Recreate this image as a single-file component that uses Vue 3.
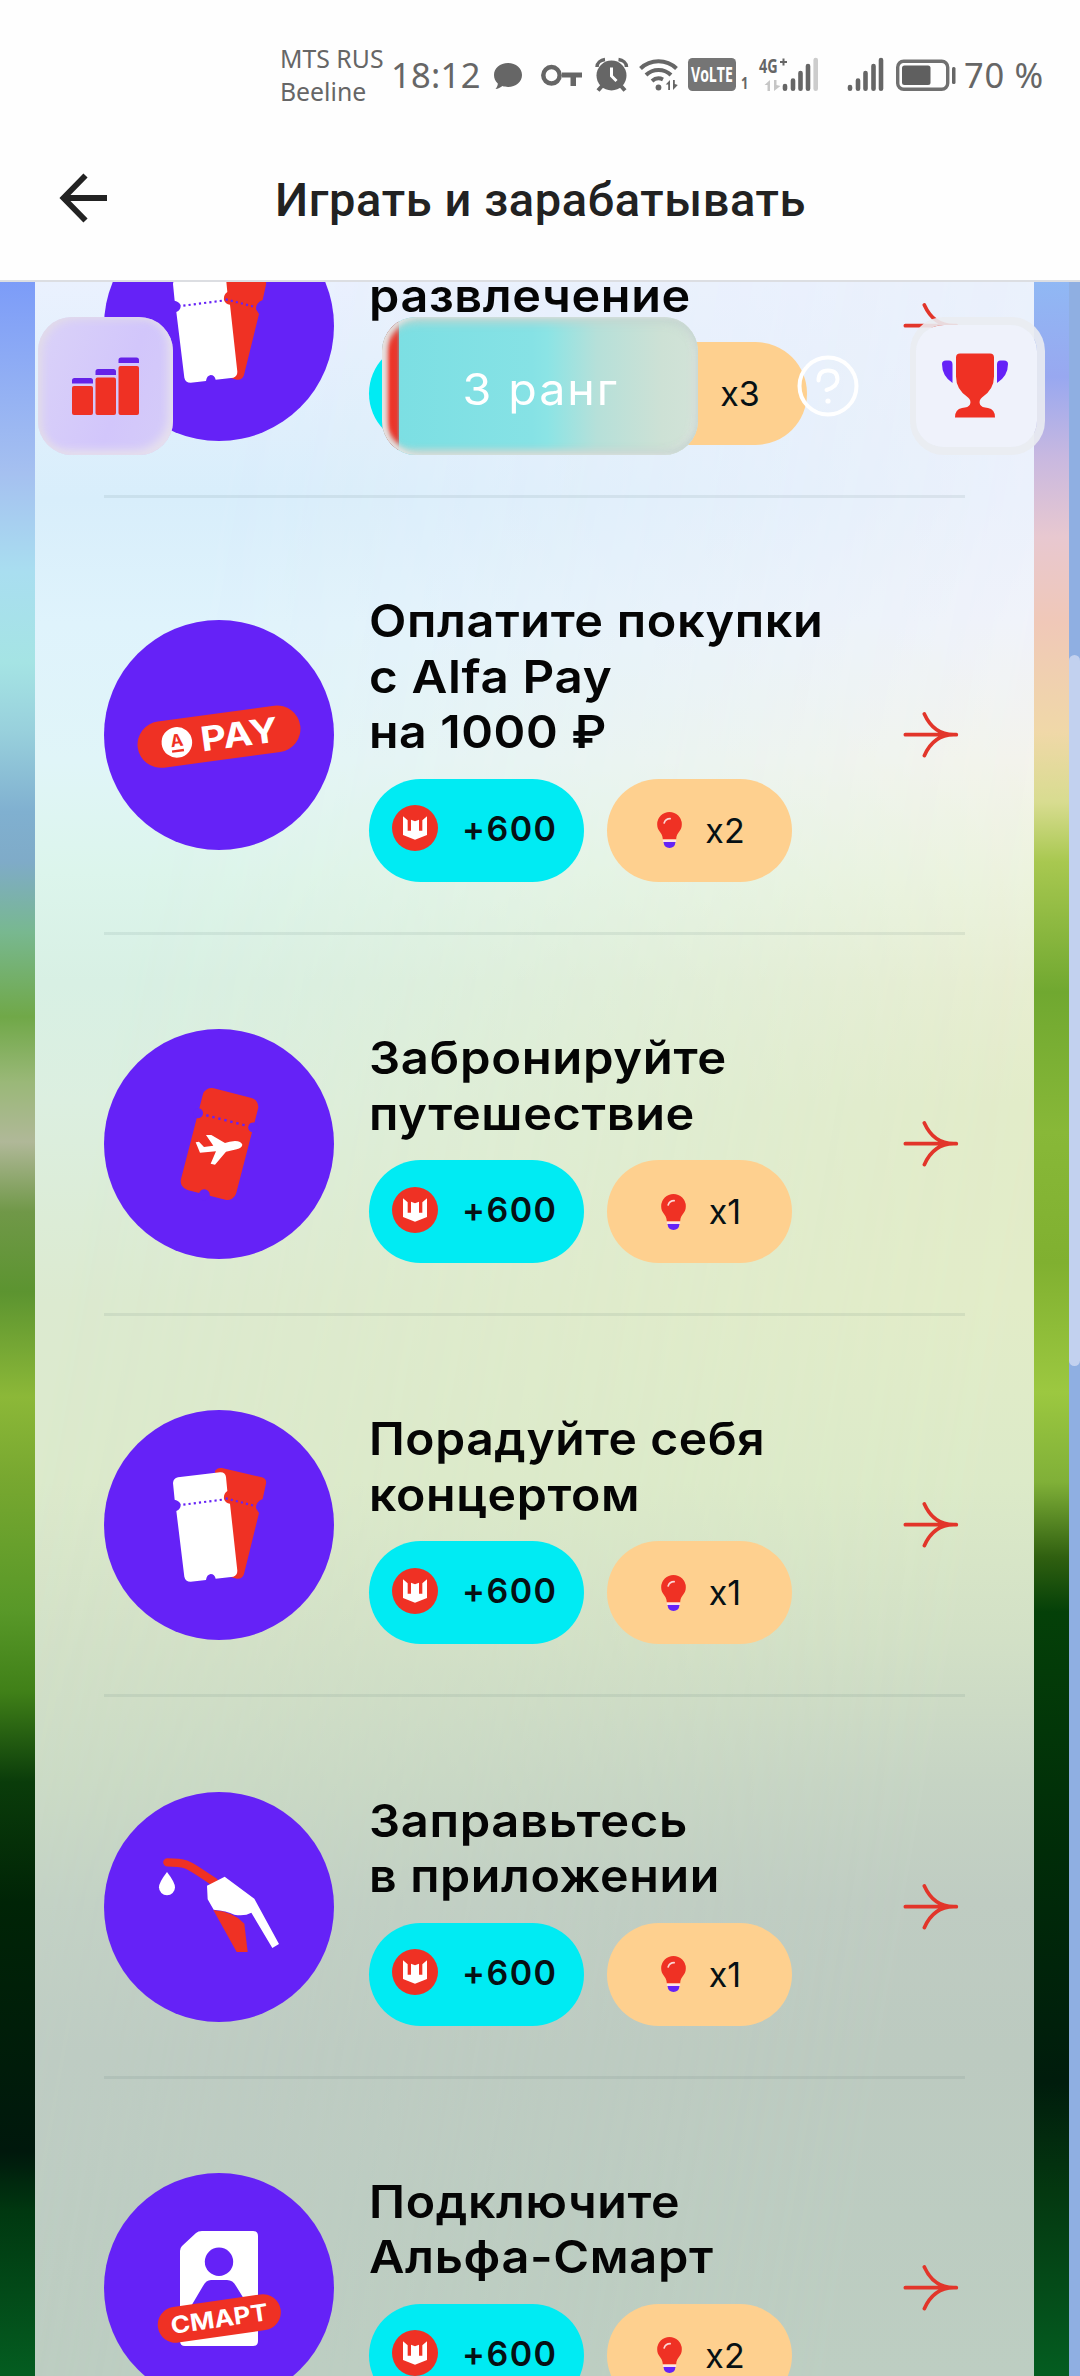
<script setup>
const tasks = [
  { icon: 'tickets', lines: [{ t: 'развлечение', w: 1.078 }], coins: '', bonus: 'x3', wide: true },
  { icon: 'pay', lines: [{ t: 'Оплатите покупки', w: 1.08 }, { t: 'с Alfa Pay', w: 1.096 }, { t: 'на 1000 ₽', w: 1.07 }], coins: '+600', bonus: 'x2' },
  { icon: 'travel', lines: [{ t: 'Забронируйте', w: 1.089 }, { t: 'путешествие', w: 1.08 }], coins: '+600', bonus: 'x1' },
  { icon: 'tickets', lines: [{ t: 'Порадуйте себя', w: 1.065 }, { t: 'концертом', w: 1.072 }], coins: '+600', bonus: 'x1' },
  { icon: 'fuel', lines: [{ t: 'Заправьтесь', w: 1.086 }, { t: 'в приложении', w: 1.074 }], coins: '+600', bonus: 'x1' },
  { icon: 'smart', lines: [{ t: 'Подключите', w: 1.073 }, { t: 'Альфа-Смарт', w: 1.082 }], coins: '+600', bonus: 'x2' },
]
</script>

<template>
  <div class="screen">
    <div class="status">
      <div class="carriers"><span>MTS RUS</span><span>Beeline</span></div>
      <div class="clock">18:12</div>
      <svg class="status-icons" viewBox="490 40 472 70" width="472" height="70">
        <g fill="#666">
          <path d="M508 63c8 0 14 5.200 14 12s-6 12-14 12c-2 0-4-.3-5.500-.9-2 1.600-4.500 2.800-7 3 1.500-1.800 2.300-3.600 2.300-5.600-2.400-2.200-3.800-5.200-3.800-8.500 0-6.800 6-12 14-12z" />
          <path d="M562 72.500h20v5h-6v8.500h-5.500v-8.500H562z" />
          <circle cx="611.500" cy="75.500" r="15" />
        </g>
        <circle cx="551.500" cy="75.300" r="8.200" fill="none" stroke="#666" stroke-width="4.500" />
        <g fill="none" stroke="#666" stroke-width="4">
          <path d="M597 67c0-4 3.500-7 8-7.500M626.500 67c0-4-3.500-7-8-7.500" stroke-width="3.500" />
          <path d="M602 86l-4 4.500M621 86l4 4.500" />
          <path d="M611.500 67.500v8.500l5 5" stroke="#fff" stroke-width="3" />
          <path d="M640.500 68.500a26 26 0 0 1 36 0M646 75a18 18 0 0 1 25 0M652 81a10 10 0 0 1 11-1.500" />
        </g>
        <circle cx="658.500" cy="87.500" r="2.900" fill="#666" />
        <path d="M670 80v10h-1.800v-5.500h-2.500zM673 90V80h1.800v4l3 1z" fill="#666" />
        <rect x="688" y="58" width="48" height="33" rx="4.500" fill="#757575" />
        <text transform="translate(691 82) scale(.64 1)" class="volte">VoLTE</text>
        <text transform="translate(741 89) scale(.8 1)" class="tiny">1</text>
        <text transform="translate(759 72.500) scale(.72 1)" class="net">4G</text>
        <path d="M780 62h7M783.500 58.500v7" stroke="#666" stroke-width="2" />
        <path d="M770 80v11h-2.500v-6h-3zM774 91V80h2.500v5l4 1z" fill="#c6c6c6" />
        <g stroke="#666" stroke-width="4.600" stroke-linecap="round">
          <path d="M785 86v2.700M793 80.500v8.200M800.500 73v15.700M808 66v22.700M850 87v1.700M858 80.500v8.200M865.500 73v15.700M873.500 66v22.700M881 60v28.700" />
          <path d="M815.700 60v28.700" stroke="#ccc" />
        </g>
        <rect x="897.700" y="61.200" width="50" height="28" rx="6" fill="none" stroke="#707070" stroke-width="3.400" />
        <rect x="902" y="65.500" width="28.500" height="19.500" rx="2.500" fill="#5f5f5f" />
        <rect x="952" y="67" width="3.500" height="17" rx="1.500" fill="#666" />
      </svg>
      <div class="clock percent">70 %</div>
    </div>

    <header class="header">
      <svg class="back" viewBox="0 0 50 52" width="50" height="52">
        <path d="M48 26H6M26.500 3.500L4.500 26l22 22.500" fill="none" stroke="#222" stroke-width="5.800" />
      </svg>
      <h1>Играть и зарабатывать</h1>
    </header>

    <main class="stage">
      <div class="panel">
        <article v-for="(task, i) in tasks" :key="i" class="task">
          <div class="badge">
            <svg viewBox="0 0 230 230" width="230" height="230">
              <g v-if="task.icon === 'pay'" transform="translate(115 116.700) rotate(-7.700)">
                <rect x="-82" y="-23.300" width="164" height="46.600" rx="23.300" fill="#ef3124" />
                <circle cx="-42.500" cy="0" r="15.300" fill="#fff" />
                <text x="-42.500" y="4" class="alfa">A</text>
                <path d="M-48.500 8.500h12" stroke="#ef3124" stroke-width="2.400" />
                <text x="-18.500" y="12.500" class="pay" textLength="78" lengthAdjust="spacingAndGlyphs">PAY</text>
              </g>
              <g v-else-if="task.icon === 'travel'">
                <g transform="translate(115.500 115) rotate(14.500)">
                  <rect x="-28.500" y="-52.500" width="57" height="105" rx="9" fill="#ef3124" />
                  <circle cx="-28.500" cy="-24.500" r="5" fill="#6522f7" />
                  <circle cx="28.500" cy="-24.500" r="5" fill="#6522f7" />
                  <circle cx="-2" cy="53" r="5.500" fill="#6522f7" />
                  <path d="M-20-24.500h42" stroke="#6522f7" stroke-width="2.400" stroke-dasharray="2.400 3.800" />
                </g>
                <path transform="translate(-24 -30) scale(.33333)" fill="#fff" d="M487 437Q484 427 465 426Q448 427 435 432L394 408L378 408L400 440L372 444L357 428L347 430L360 461L408 457L392 494L405 497L438 458L470 451Q486 447 487 437z" />
              </g>
              <g v-else-if="task.icon === 'tickets'" transform="translate(-24 -21) scale(.33333)">
                <path d="M405 246Q412 235 426 237L546 265Q561 270 558 284L548 330Q527 338 528 358L537 372L492 555Q487 571 470 569L440 560z" fill="#ef3124" />
                <path d="M279 282Q280 268 294 265L420 250Q436 249 438 264L442 306Q430 314 432 330Q436 342 450 344L472 545Q472 559 460 563L407 569Q404 555 392 555Q380 557 378 573L332 578Q316 578 313 563L289 366Q303 360 302 346Q298 335 284 332z" fill="#fff" />
                <path d="M310 347L428 332" stroke="#6522f7" stroke-width="6.500" stroke-dasharray="6.500 9.200" />
                <path d="M437 328L522 350" stroke="#6522f7" stroke-width="6.500" stroke-dasharray="6.500 9.200" />
              </g>
              <g v-else-if="task.icon === 'fuel'" transform="translate(-24 -23) scale(.33333)">
                <path d="M262 280C330 280 325 290 402 338" fill="none" stroke="#ef3124" stroke-width="25" stroke-linecap="round" />
                <path d="M400 423Q462 428 493 464L503 549H470z" fill="#ef3124" />
                <path d="M381 350L434 323L523 389L597 525L577 537L514 431Q495 442 463 437Q440 425 401 422L383 391z" fill="#fff" />
                <path d="M261 309Q285 340 285 355A24 24 0 0 1 237 355Q237 340 261 309z" fill="#fff" />
              </g>
              <g v-else>
                <path d="M98 58h51q5 0 5 5v105q0 5-5 5H81q-5 0-5-5V78q0-3 2-5l14-13q2-2 6-2z" fill="#fff" />
                <circle cx="115" cy="88.700" r="14.200" fill="#6522f7" />
                <path d="M86 135l13-22q3-6 8-6h16q6 0 9 6l8 13z" fill="#6522f7" />
                <g transform="translate(115.300 145.500) rotate(-8.200)">
                  <rect x="-62" y="-18" width="124" height="36" rx="18" fill="#ef3124" />
                  <text x="-49" y="8.500" class="smart" textLength="98" lengthAdjust="spacingAndGlyphs">СМАРТ</text>
                </g>
              </g>
            </svg>
          </div>
          <div class="body">
            <h2>
              <span v-for="line in task.lines" :key="line.t" :style="{ transform: `scaleX(${line.w})` }">{{ line.t }}</span>
            </h2>
            <div class="chips">
              <div class="chip coins" :class="{ wide: task.wide }">
                <svg viewBox="936 675 138 138" width="46" height="46">
                  <circle cx="1005" cy="744" r="69" fill="#ef3124" />
                  <path fill="#fff" d="M969 709L983 721V752H993V719L1005 724L1017 719V752H1027V721L1041 709V765L1005 779L969 765z" />
                </svg>
                <span>{{ task.coins }}</span>
              </div>
              <div class="chip bonus">
                <svg viewBox="413 689 74 108" width="25" height="36">
                  <path d="M413 726a37 37 0 0 1 74 0c0 22-16 23-17 45h-40c-1-22-17-23-17-45z" fill="#ef3124" />
                  <path d="M434 722q4-13 18-13" fill="none" stroke="#fff" stroke-opacity=".8" stroke-width="5" stroke-linecap="round" />
                  <path d="M430 772h40v7h-40z" fill="#fde0e8" />
                  <path d="M432 779h36q-2 18-18 18t-18-18z" fill="#6522f7" />
                </svg>
                <span>{{ task.bonus }}</span>
              </div>
            </div>
          </div>
          <svg class="go" viewBox="1149 399 166 138" width="56" height="46">
            <path d="M1155 467H1308M1212 405Q1240 467 1300 467M1212 530Q1240 467 1300 467" fill="none" stroke="#e2352a" stroke-width="11" stroke-linecap="round" />
          </svg>
        </article>
      </div>
      <div class="scroll"><div class="thumb"></div></div>

      <div class="overlay">
        <button class="tile rating">
          <svg viewBox="71 357 67 58" width="67" height="58">
            <g fill="#6522e8">
              <path d="M71 383.500v-3q0-2.500 2.500-2.500h16q2.500 0 2.500 2.500v3zM94.500 375v-3.500q0-2.500 2.500-2.500h15.500q2.500 0 2.500 2.500v3.500zM117.500 363v-3q0-2.500 2.500-2.500h15.500q2.500 0 2.500 2.500v3z" />
            </g>
            <g fill="#ef3124">
              <rect x="71" y="386" width="21" height="29" rx="2" />
              <rect x="94.500" y="377.500" width="20.500" height="37.500" rx="2" />
              <rect x="117.500" y="366" width="20.500" height="49" rx="2" />
            </g>
          </svg>
        </button>
        <div class="rank"><i></i><span>3 ранг</span></div>
        <svg class="help" viewBox="0 0 64 64" width="64" height="64">
          <circle cx="32" cy="32" r="28.500" fill="none" stroke="#fff" stroke-width="4" />
          <path d="M22.500 26.500q0-10 9.500-10t9.500 9q0 7-11 10.500" fill="none" stroke="#fff" stroke-width="4" stroke-linecap="round" />
          <circle cx="32" cy="47" r="2.600" fill="#fff" />
        </svg>
        <button class="tile cup">
          <svg viewBox="942 354 66 65" width="66" height="65">
            <path d="M960 354.500h30q4 0 4 4v19q0 13-12 21-3.500 3-2 7 1.500 3 8 3.500 7 1 7 9.500h-40q0-8.500 7-9.500 6.500-.5 8-3.500 1.500-4-2-7-12-8-12-21v-19q0-4 4-4z" fill="#ef3124" />
            <path d="M952.500 384q-10.500-7-10.500-19 0-3.500 4-3.500h3q3.500 0 3.500 4zM997 384q11-7 11-19 0-3.500-4-3.500h-3.500q-3.500 0-3.500 4z" fill="#6522f7" />
          </svg>
        </button>
      </div>
    </main>
  </div>
</template>

<style>
body { margin: 0; }
</style>

<style scoped>
.screen {
  width: 1080px;
  height: 2376px;
  overflow: hidden;
  display: flex;
  flex-direction: column;
  background: #fefefe;
  font-family: Inter, "Liberation Sans", sans-serif;
}
.status {
  display: flex;
  height: 70px;
  padding: 40px 0 0 280px;
  color: #666;
  font-family: "Noto Sans", sans-serif;
}
.carriers {
  width: 111px;
  flex: none;
  display: flex;
  flex-direction: column;
  font-size: 24.800px;
  line-height: 33px;
  padding-top: 2px;
  white-space: nowrap;
}
.clock {
  font-size: 34.500px;
  line-height: 70px;
  width: 99px;
  letter-spacing: .3px;
  white-space: nowrap;
}
.percent {
  margin-left: 2px;
  letter-spacing: .7px;
}
.status-icons { flex: none; }
.volte { font: 700 22px "Open Sans", sans-serif; fill: #fff; }
.tiny { font: 700 16px "Open Sans", sans-serif; fill: #666; }
.net { font: 700 20px "Open Sans", sans-serif; fill: #666; }
.header {
  box-sizing: border-box;
  height: 172px;
  flex: none;
  display: flex;
  align-items: center;
  padding: 5px 0 0 59px;
  border-bottom: 2px solid #dcdee2;
}
.header h1 {
  margin: 5px 0 0 166px;
  font: 500 47px/60px Roboto, sans-serif;
  letter-spacing: .6px;
  color: #222;
  white-space: nowrap;
}
.stage {
  flex: 1;
  min-height: 0;
  position: relative;
  display: flex;
  overflow: hidden;
  background:
    linear-gradient(180deg, #7c9cf8 0, #a5c0f0 190px, #a9def0 290px, #a5e4e4 380px, #98d0dc 450px, #80b0d0 530px, #7fabc8 580px, #78b890 650px, #70a848 735px, #9ab878 800px, #b0b898 860px, #709848 930px, #5c9430 1010px, #8cb838 1115px, #78a830 1195px, #589828 1330px, #408018 1410px, #0a3c0a 1500px, #002406 1620px, #00180c 1870px, #003810 1930px, #045c20 2090px) 0 0 / 36px 100% no-repeat,
    linear-gradient(180deg, #90b8f4 0, #98a8f0 95px, #c8b8e0 175px, #e8c8d0 255px, #f0c8b8 340px, #f0d8a8 450px, #d8dc90 520px, #a8c850 580px, #70a830 710px, #88b838 850px, #80b030 980px, #9cc840 1110px, #80b038 1200px, #306010 1275px, #044008 1330px, #002c08 1570px, #001c0c 1800px, #043810 1910px, #045c20 2090px);
}
.panel {
  box-sizing: border-box;
  position: relative;
  width: 999px;
  margin-left: 35px;
  padding: 0 69px;
  flex: none;
  overflow: hidden;
  background: linear-gradient(180deg, #eaf1fe 0, #d8eefb 218px, #dff3fc 340px, #e0f5f8 480px, #dcf5ec 590px, #d8f0e4 700px, #dcefe0 820px, #dcead0 1020px, #dceacc 1200px, #d3e1c8 1360px, #ccdcc6 1500px, #c4d3c6 1620px, #bfcdc4 1770px, #bdcec2 2094px);
}
.panel::before {
  content: "";
  position: absolute;
  inset: 0;
  background: linear-gradient(180deg, #eaf0fb 0, #eef1fb 218px, #f2f2f9 340px, #f5f3ea 480px, #edf2dc 600px, #e8edd0 700px, #e2ebc8 820px, #e2ecc8 1020px, #dceac8 1200px, #d2e0c6 1360px, #c6d4c4 1500px, #bfccc2 1620px, #bccac0 1770px, #bdcec2 2094px);
  mask-image: linear-gradient(100deg, transparent 15%, #000 85%);
}
.task {
  position: relative;
  display: flex;
  align-items: center;
  padding: 90.300px 0 50px;
  border-bottom: 3px solid rgba(60, 90, 90, .09);
}
.task:first-child { margin-top: -165.300px; }
.badge {
  width: 230px;
  height: 230px;
  flex: none;
  border-radius: 50%;
  background: #6522f7;
}
.badge svg { display: block; }
.alfa { font: 700 17px Inter, sans-serif; fill: #ef3124; text-anchor: middle; }
.pay { font: 700 34px Inter, sans-serif; fill: #fff; }
.smart { font: 700 23.500px Inter, sans-serif; fill: #fff; }
.body {
  margin-left: 35px;
  flex: 1;
}
h2 {
  position: relative;
  top: 5px;
  margin: 0 0 24px;
  min-height: 111px;
  display: flex;
  flex-direction: column;
  align-items: flex-start;
  justify-content: flex-end;
  font-weight: 600;
  font-size: 45px;
  line-height: 55.500px;
  letter-spacing: .6px;
  color: #050505;
  white-space: nowrap;
}
h2 span { transform-origin: 0 50%; }
.chips { display: flex; gap: 23px; }
.chip {
  box-sizing: border-box;
  height: 103px;
  border-radius: 52px;
  display: flex;
  align-items: center;
  color: #061014;
  font-size: 34px;
}
.coins {
  width: 215px;
  padding: 0 0 4px 23px;
  background: #00ebf3;
  font-weight: 600;
  letter-spacing: 1.500px;
}
.coins span { margin-left: 24px; }
.coins.wide { width: 230px; }
.bonus {
  width: 185px;
  padding-left: 3px;
  justify-content: center;
  gap: 23px;
  background: #fed08f;
}
.go { flex: none; margin-right: 6px; }
.scroll {
  width: 11px;
  margin-left: auto;
  background: #8fafe2;
}
.thumb {
  margin-top: 373px;
  height: 711px;
  border-radius: 6px;
  background: #c2d1ef;
}
.overlay {
  position: absolute;
  left: 38px;
  top: 35px;
  width: 1007px;
  height: 138px;
  display: flex;
  align-items: center;
}
.tile {
  box-sizing: border-box;
  width: 135px;
  height: 138px;
  flex: none;
  display: flex;
  align-items: center;
  justify-content: center;
  border: 0;
  padding: 0;
  border-radius: 34px;
}
.rating {
  background: linear-gradient(110deg, #dad2f8, #d2c6fb 60%, #d5ccf8);
  box-shadow: inset 4px 2px 8px #e2dce8, inset -5px -5px 9px #e6e0ee;
}
.cup {
  margin-left: auto;
  border: 8px solid rgba(234, 236, 241, .9);
  border-left-width: 6px;
  background: #eff2fb;
  background-clip: padding-box;
}
.cup svg { margin-left: -4px; margin-top: -2px; }
.rank {
  position: relative;
  box-sizing: border-box;
  width: 316px;
  height: 138px;
  margin-left: 209px;
  flex: none;
  display: flex;
  align-items: center;
  justify-content: center;
  border-radius: 34px;
  overflow: hidden;
  background: linear-gradient(90deg, #7cdfe3 17px, #86e2e5 150px, #8be4e5 165px, #b6e0d9 215px, #cde1d5 280px, #d2e3d8);
  color: #fff;
  font-size: 44px;
  letter-spacing: 1.800px;
}
.rank::after {
  content: "";
  position: absolute;
  inset: 0;
  border-radius: 34px;
  box-shadow: inset 5px 0 5px rgba(236, 232, 232, .8), inset 0 6px 8px rgba(195, 213, 208, .9), inset 0 -5px 7px rgba(195, 213, 208, .9), inset -5px -3px 7px rgba(225, 228, 224, .9);
}
.rank i {
  position: absolute;
  left: 0;
  top: 0;
  width: 17px;
  height: 100%;
  background: linear-gradient(90deg, #e8bdb8, #ef3124 50%, #e63a30 85%, #b07070);
}
.rank span {
  position: relative;
  top: 3px;
  left: 1px;
  transform: scaleX(1.060);
}
.help { flex: none; margin-left: 98px; }
</style>
